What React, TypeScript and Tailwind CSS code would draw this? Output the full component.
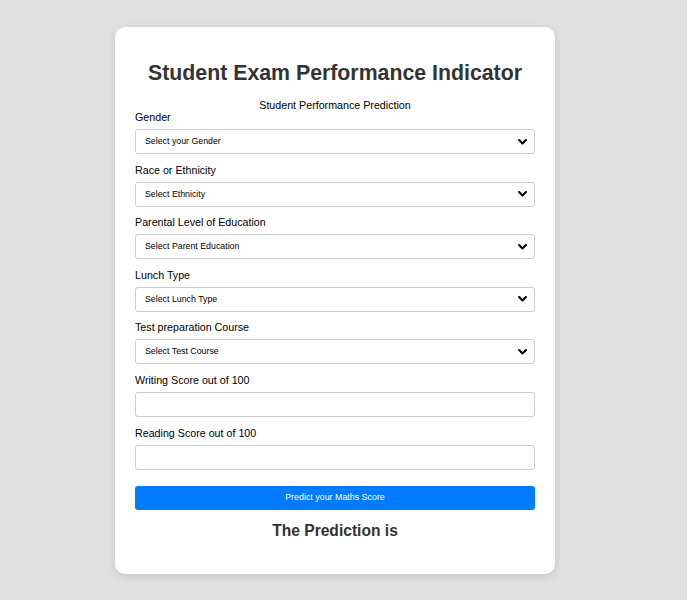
import React from 'react'

const selects = [
  { label: 'Gender', placeholder: 'Select your Gender' },
  { label: 'Race or Ethnicity', placeholder: 'Select Ethnicity' },
  { label: 'Parental Level of Education', placeholder: 'Select Parent Education' },
  { label: 'Lunch Type', placeholder: 'Select Lunch Type' },
  { label: 'Test preparation Course', placeholder: 'Select Test Course' },
]

const inputs = ['Writing Score out of 100', 'Reading Score out of 100']

const Chevron = () => (
  <svg className="pointer-events-none absolute right-[8px] top-1/2 -translate-y-1/2" width="9" height="6" viewBox="0 0 9 6" fill="none">
    <path d="M1.1 1.1 L4.5 4.4 L7.9 1.1" stroke="#000" strokeWidth="2.1" strokeLinecap="round" strokeLinejoin="round" />
  </svg>
)

const App = () => {
  return (
    <div className="min-h-[600px] bg-[#e0e0e0] font-['Liberation_Sans',Arial,sans-serif]">
      <div className="flex w-[670px] justify-center pt-[27px] pb-[26px]">
        <div className="w-[440px] rounded-[10px] bg-white px-[20px] pt-[20px] pb-[34px] shadow-[0_2px_8px_rgba(0,0,0,0.12)]">
          <h1 className="mt-[13px] text-center text-[21.3px] font-bold leading-[26px] text-[#333]">
            Student Exam Performance Indicator
          </h1>
          <div className="mt-[13px] text-center text-[10.7px] leading-[12px] text-black">
            Student Performance Prediction
          </div>

          {selects.map((s) => (
            <div key={s.label} className="mb-[9.6px]">
              <label className="block text-[10.7px] leading-[12px] text-black">{s.label}</label>
              <div className="relative mt-[6px]">
                <select
                  defaultValue=""
                  className="block h-[25px] w-full appearance-none rounded-[3px] border border-[#ccc] bg-white pl-[9px] text-[8.8px] text-black outline-none"
                >
                  <option value="" disabled>
                    {s.placeholder}
                  </option>
                </select>
                <Chevron />
              </div>
            </div>
          ))}

          {inputs.map((label) => (
            <div key={label} className="mb-[9.6px]">
              <label className="block text-[10.7px] leading-[12px] text-black">{label}</label>
              <input
                type="number"
                className="mt-[6px] block h-[25px] w-full rounded-[3px] border border-[#ccc] bg-white px-[9px] text-[8.8px] outline-none"
              />
            </div>
          ))}

          <button className="mt-[16.5px] block h-[24px] w-full rounded-[3px] bg-[#007bff] text-center text-[8.9px] text-white">
            Predict your Maths Score
          </button>

          <h2 className="mt-[12px] text-center text-[15.6px] font-bold leading-[18px] text-[#333]">
            The Prediction is
          </h2>
        </div>
      </div>
    </div>
  )
}

export default App
